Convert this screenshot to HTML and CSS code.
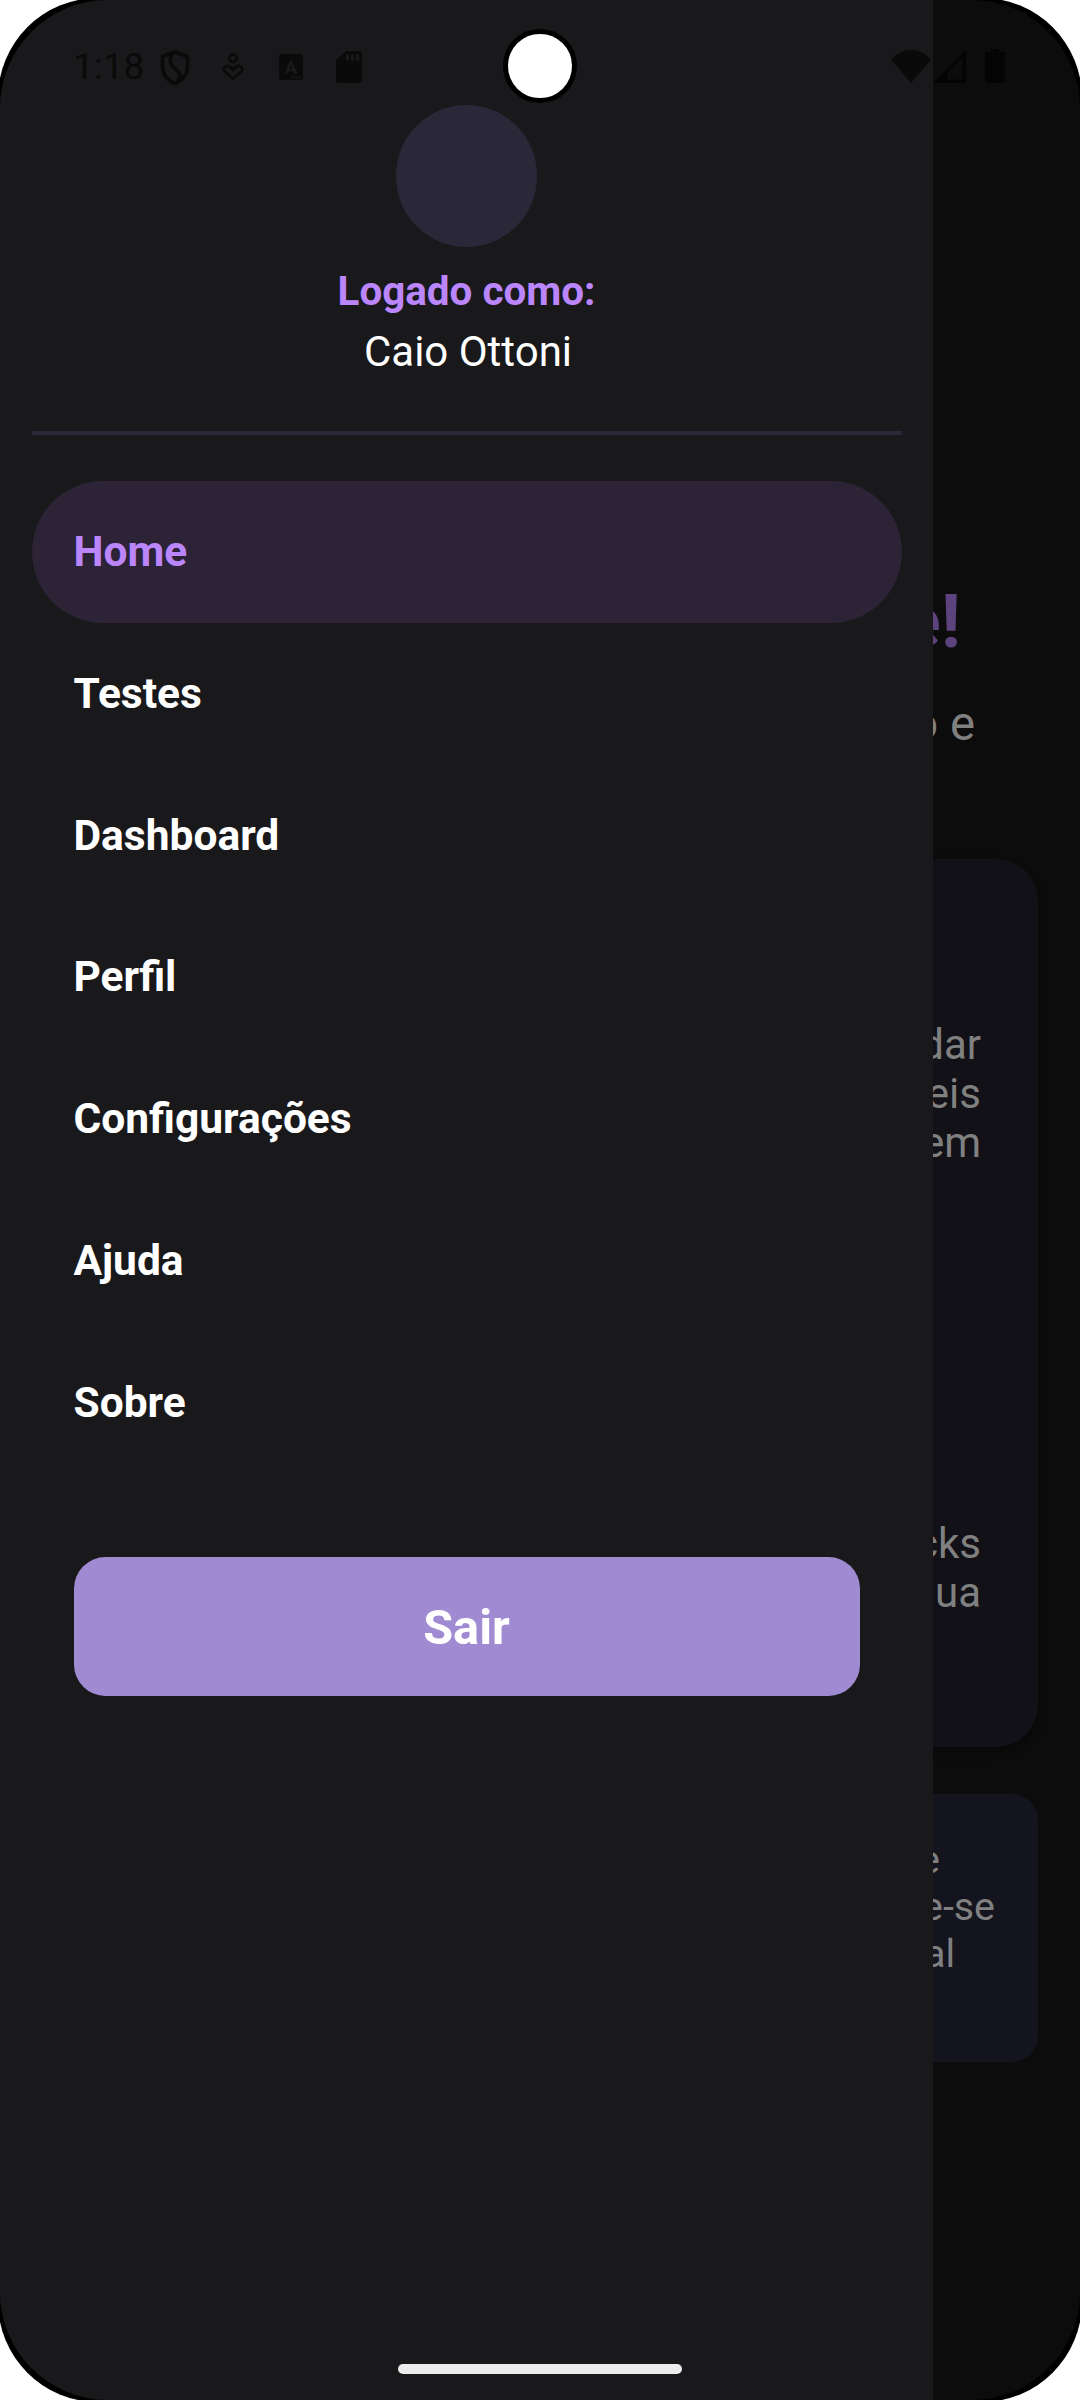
FILE: index.html
```html
<!DOCTYPE html>
<html lang="pt-BR">
<head>
<meta charset="utf-8">
<title>Menu</title>
<link rel="stylesheet" href="styles.css">
</head>
<body>
<div class="bezel"></div>
<div class="screen">
  <aside class="drawer">
    <header class="profile">
      <div class="avatar"></div>
      <div class="profile-label">Logado como:</div>
      <div class="profile-name">Caio Ottoni</div>
    </header>
    <div class="divider"></div>
    <nav class="menu">
      <a class="item active">Home</a>
      <a class="item">Testes</a>
      <a class="item">Dashboard</a>
      <a class="item">Perfil</a>
      <a class="item">Configurações</a>
      <a class="item">Ajuda</a>
      <a class="item">Sobre</a>
    </nav>
    <button class="logout">Sair</button>
  </aside>
  <main class="page">
    <h1 class="title">e!</h1>
    <p class="subtitle">o e</p>
    <section class="card">
      <p class="text">dar</p>
      <p class="text">eis</p>
      <p class="text">em</p>
      <p class="text second">cks</p>
      <p class="text">ua</p>
    </section>
    <section class="tip">
      <p class="tip-line short">e</p>
      <p class="tip-line">e-se</p>
      <p class="tip-line mid">al</p>
    </section>
  </main>
</div>

<div class="status">
  <span class="time">1:18</span>
  <svg class="shield" width="30" height="36" viewBox="0 0 30 36">
    <path d="M15 2 L27.500 6.500V16C27.500 24.500 22.500 30.500 15 33.500C7.500 30.500 2.500 24.500 2.500 16V6.500Z" fill="none" stroke="#0a0a0a" stroke-width="3.600" stroke-linejoin="round"/>
    <path d="M12.500 4C8 12 11 15.500 16 19.500C21.500 24 20.500 28 17 32" fill="none" stroke="#0a0a0a" stroke-width="3.600"/>
  </svg>
  <svg class="care" width="22" height="29" viewBox="0 0 22 29">
    <circle cx="11" cy="5.200" r="3.700" fill="none" stroke="#0a0a0a" stroke-width="2.600"/>
    <path d="M11 26L3.200 18.800C0.800 16.300 1.800 13.200 4.800 12.900C7.500 12.700 9 14.500 11 17C13 14.500 14.500 12.700 17.200 12.900C20.200 13.200 21.200 16.300 18.800 18.800Z" fill="none" stroke="#0a0a0a" stroke-width="2.600"/>
  </svg>
  <svg class="letter" width="24" height="26" viewBox="0 0 24 26">
    <rect width="24" height="26" rx="2" fill="#0a0a0a"/>
    <text x="12" y="19.500" text-anchor="middle" class="glyph">A</text>
    <path d="M13 22.200h2.200v2H13zM16.500 22.200h2.200v2h-2.200zM20 22.200h2.200v2H20z" fill="#19191b"/>
  </svg>
  <svg class="sd" width="26" height="32" viewBox="0 0 26 32">
    <path d="M10 0H23.500Q26 0 26 2.500V29.500Q26 32 23.500 32H2.500Q0 32 0 29.500V9.500Z" fill="#0a0a0a"/>
    <path d="M10 3.500h3v6h-3zM15 3.500h3v6h-3zM20 3.500h3v6h-3z" fill="#19191b"/>
  </svg>
  <svg class="wifi" width="40" height="33" viewBox="0 0 40 33">
    <path d="M0 9.500Q8 0 20 0T40 9.500L20 33Z" fill="#0a0a0a"/>
  </svg>
  <svg class="signal" width="33" height="33" viewBox="0 0 33 33">
    <path d="M33 0V33H0ZM29.500 8L14.500 23V29.500H29.500Z" fill="#040404" fill-rule="evenodd"/>
  </svg>
  <svg class="battery" width="20" height="34" viewBox="0 0 20 34">
    <path d="M6 0H14V3H17.500Q20 3 20 5.500V31.500Q20 34 17.500 34H2.500Q0 34 0 31.500V5.500Q0 3 2.500 3H6Z" fill="#040404"/>
  </svg>
</div>
<div class="camera"></div>
<div class="home-bar"></div>
</body>
</html>
```

FILE: styles.css
```css
* { box-sizing: border-box; }
body {
  margin: 0;
  position: relative;
  width: 1080px;
  height: 2400px;
  overflow: hidden;
  background: #fff;
  font-family: Roboto, "Liberation Sans", sans-serif;
}
h1, p { margin: 0; }

/* black rim around the display corners */
.bezel {
  position: absolute;
  inset: -2px;
  border-radius: 100px;
  background: #000;
}
.screen {
  position: relative;
  display: flex;
  height: 2400px;
  overflow: hidden;
  border-radius: 108px;
  background: #0c0c0c;
}

.drawer {
  flex: none;
  display: flex;
  flex-direction: column;
  width: 933px;
  padding: 105px 31.500px 0;
  background: #19191b;
  color: #fff;
}
.profile {
  display: flex;
  flex-direction: column;
  align-items: center;
}
.avatar {
  width: 141.500px;
  height: 141.500px;
  border-radius: 50%;
  background: #2a2838;
}
.profile-label {
  margin-top: 22px;
  font-size: 40.400px;
  line-height: 46px;
  font-weight: 700;
  color: #bb86fc;
}
.profile-name {
  margin-top: 12.500px;
  padding-left: 3px;
  font-size: 42px;
  line-height: 49px;
}
.divider {
  margin-top: 55px;
  height: 4px;
  background: #2a2838;
}
.menu { margin-top: 46px; }
.item {
  display: block;
  height: 141.750px;
  padding-left: 42px;
  border-radius: 71px;
  font-size: 42.500px;
  line-height: 141.750px;
  font-weight: 700;
}
.item.active {
  background: #2c2436;
  color: #bb86fc;
}
.logout {
  margin: 84px 42px 0;
  height: 139px;
  padding: 1px 0 0;
  border: 0;
  border-radius: 31.500px;
  background: #a08ad2;
  color: #fff;
  font: 700 48.600px Roboto, sans-serif;
}

.page {
  flex: 1;
  min-width: 0;
  padding-top: 578px;
  overflow: hidden;
  color: #808080;
}
.title, .subtitle, .text, .tip-line {
  display: flex;
  justify-content: flex-end;
  white-space: pre;
}
.title {
  padding-right: 119px;
  font-size: 74.500px;
  line-height: 88px;
  font-weight: 700;
  color: #5d437e;
}
.subtitle {
  margin-top: 30px;
  padding-right: 105px;
  font-size: 47.250px;
  line-height: 56px;
}
.card {
  height: 888px;
  margin-top: 107px;
  margin-right: 42px;
  padding: 161px 57px 0 0;
  border-radius: 0 42px 42px 0;
  background: #121117;
  box-shadow: 0 5px 8px rgba(0, 0, 0, .35);
}
.text {
  font-size: 42px;
  line-height: 49.220px;
}
.text.second { margin-top: 351.500px; }
.tip {
  height: 268px;
  margin-top: 47px;
  margin-right: 42px;
  padding: 42px 43px 0 0;
  border-radius: 0 26px 26px 0;
  background: #14141e;
}
.tip-line {
  font-size: 39.400px;
  line-height: 47px;
}
.tip-line.short { padding-right: 55px; }
.tip-line.mid { padding-right: 40px; }

.status {
  position: absolute;
  top: 0;
  left: 0;
  width: 1080px;
  height: 132px;
  padding: 0 75px 0 73px;
  display: flex;
  align-items: center;
}
.status svg { flex: none; }
.time {
  width: 87px;
  font-size: 37px;
  line-height: 44px;
  padding-top: 1px;
  color: #0a0a0a;
}
.shield { margin-top: 3px; }
.care { margin-left: 32px; margin-top: 2px; }
.letter { margin-left: 35px; margin-top: 2px; }
.sd { margin-left: 33px; margin-top: 2px; }
.wifi { margin-left: auto; }
.signal { margin-left: 2px; }
.battery { margin-left: 19px; }
.glyph { font: 700 19px Roboto, sans-serif; fill: #19191b; }

.camera {
  position: absolute;
  left: 503px;
  top: 29px;
  width: 74px;
  height: 74px;
  border: 5px solid #000;
  border-radius: 50%;
  background: #fff;
}
.home-bar {
  position: absolute;
  left: 398px;
  top: 2364px;
  width: 284px;
  height: 10px;
  border-radius: 5px;
  background: #ececec;
}
```
